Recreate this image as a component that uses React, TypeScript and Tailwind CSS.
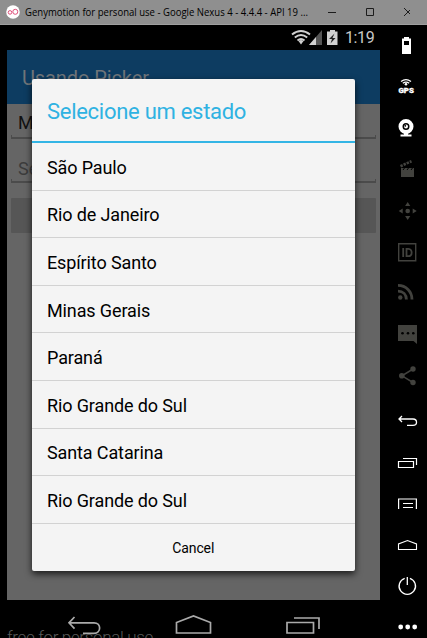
import type { ReactNode } from "react";

const states = [
  "São Paulo",
  "Rio de Janeiro",
  "Espírito Santo",
  "Minas Gerais",
  "Paraná",
  "Rio Grande do Sul",
  "Santa Catarina",
  "Rio Grande do Sul",
];

function Tool({ children, off }: { children: ReactNode; off?: boolean }) {
  return (
    <div className="flex h-[41.5px] shrink-0 items-center pl-4">
      <svg
        width="24"
        height="24"
        viewBox="0 0 24 24"
        fill="none"
        stroke="currentColor"
        className={off ? "text-[#42423e]" : "text-white"}
      >
        {children}
      </svg>
    </div>
  );
}

function Sidebar() {
  return (
    <aside className="flex w-[47px] shrink-0 flex-col overflow-hidden bg-black">
      {/* battery */}
      <Tool>
        <path d="M8 3h5v1.500h2V20H6V4.500h2zM8 7v4h5V7z" fill="currentColor" fillRule="evenodd" stroke="none" />
      </Tool>
      {/* gps */}
      <Tool>
        <path d="M5 6.500q5-3.800 10 0M6.800 8.200q3.200-2.200 6.400 0" strokeWidth="1.300" />
        <circle cx="10" cy="9.300" r="1.300" fill="currentColor" stroke="none" />
        <text x="2.500" y="17.800" fontSize="7" fontWeight="900" textLength="15.400" lengthAdjust="spacingAndGlyphs" fill="currentColor" stroke="currentColor" strokeWidth=".3" className="font-['Roboto',sans-serif]">
          GPS
        </text>
      </Tool>
      {/* webcam */}
      <Tool>
        <circle cx="10" cy="9.500" r="5.500" strokeWidth="4" />
        <circle cx="10" cy="9.500" r="2" fill="currentColor" stroke="none" />
        <circle cx="9.300" cy="8.800" r=".9" fill="black" stroke="none" />
        <path d="M8 16h4v1.500h3.500v2h-11v-2H8z" fill="currentColor" stroke="none" />
      </Tool>
      {/* clapperboard */}
      <Tool off>
        <path d="M5 10h13v9H5z" fill="currentColor" stroke="none" />
        <path d="M4.500 8.200 15.500 3.200" strokeWidth="2.600" strokeDasharray="2.400 1" />
        <path d="m7 12 1.500-2M11 12l1.500-2M15 12l1.500-2" stroke="black" />
      </Tool>
      {/* move */}
      <Tool off>
        <g fill="currentColor" stroke="none">
          <circle cx="11.700" cy="11" r="2.300" />
          <path d="m11.700 2 2.600 4H9.100zM11.700 20l2.600-4H9.100zM2.700 11l4-2.600v5.200zM20.700 11l-4-2.600v5.200z" />
        </g>
      </Tool>
      {/* id */}
      <Tool off>
        <path d="M2.700 2.700h17v17h-17z" strokeWidth="1.400" />
        <path d="M7.200 7v9M10.500 7.800v7.400h2c4.200 0 4.200-7.400 0-7.400z" strokeWidth="1.800" />
      </Tool>
      {/* rss */}
      <Tool off>
        <path d="M2 2.400c8 0 14 6 14 14M2 8.100c5 0 8.400 3.400 8.400 8.400" strokeWidth="2.800" />
        <circle cx="4.300" cy="14.500" r="2.200" fill="currentColor" stroke="none" />
      </Tool>
      {/* message */}
      <Tool off>
        <path d="M2 1h19v19l-3.500-3H2z" fill="currentColor" stroke="none" />
        <g fill="black" stroke="none">
          <circle cx="6.500" cy="9.300" r="1.300" />
          <circle cx="12" cy="9.300" r="1.300" />
          <circle cx="17.300" cy="9.300" r="1.300" />
        </g>
      </Tool>
      {/* share */}
      <Tool off>
        <path d="M17 3 6 9.800l11 6.700" strokeWidth="1.500" />
        <g fill="currentColor" stroke="none">
          <circle cx="17" cy="3" r="2.700" />
          <circle cx="5.800" cy="9.800" r="2.800" />
          <circle cx="17" cy="16.500" r="2.700" />
        </g>
      </Tool>
      {/* back */}
      <Tool>
        <path d="m6 9-3 3 3 3M3 12h14c4.700 0 4.700 6.300 0 6.300h-6" strokeWidth="1.300" />
      </Tool>
      {/* recents */}
      <Tool>
        <path d="M2.500 12.500h15v6h-15zM7 9.500h13.500V16" strokeWidth="1.200" />
      </Tool>
      {/* menu */}
      <Tool>
        <path d="M2.600 19V9h17.800v10" strokeWidth="1.200" />
        <path d="M7 13.500h10M7 17.500h10" strokeWidth="1.200" />
      </Tool>
      {/* home */}
      <Tool>
        <path d="M2.500 17.500V12l9-3.500 9 3.500v5.500z" strokeWidth="1.100" />
      </Tool>
      {/* power */}
      <Tool>
        <path d="M8.700 5.300a8.200 8.200 0 1 0 5.200 0M11.300 4v8" strokeWidth="1.300" />
      </Tool>
      {/* more */}
      <Tool>
        <g fill="currentColor" stroke="none">
          <circle cx="4.700" cy="12" r="2.400" />
          <circle cx="11.700" cy="12" r="2.400" />
          <circle cx="18.700" cy="12" r="2.400" />
        </g>
      </Tool>
    </aside>
  );
}

function TitleBar() {
  return (
    <header className="flex h-[25px] shrink-0 items-center border-b border-[#a0a0a0] bg-[#8f8f8f] font-['Open_Sans',sans-serif] text-black">
      <svg width="14" height="14" viewBox="0 0 14 14" className="ml-1.5 shrink-0">
        <circle cx="7" cy="7" r="6.800" fill="white" />
        <g fill="none" stroke="#e0507c">
          <circle cx="4" cy="7.400" r="1.800" />
          <circle cx="9.300" cy="6.800" r="2.500" />
        </g>
      </svg>
      <svg width="286" height="20" className="ml-[4px] shrink-0">
        <text x="1" y="14" fontSize="10.500" textLength="283" lengthAdjust="spacingAndGlyphs">
          Genymotion for personal use - Google Nexus 4 - 4.4.4 - API 19 ...
        </text>
      </svg>
      <svg width="100" height="24" viewBox="0 0 100 24" fill="none" stroke="#1c1c1c" className="shrink-0">
        <path d="M18 12.500h8M56.500 8.500h7v7h-7z" />
        <path d="m94.500 8 8 8m0-8-8 8" transform="translate(-.5 0)" />
      </svg>
    </header>
  );
}

function StatusBar() {
  return (
    <div className="flex h-[25px] shrink-0 items-center justify-end bg-black">
      <svg width="50" height="20" viewBox="0 0 50 20" className="shrink-0">
        <g fill="none" stroke="#d0d0d0" strokeWidth="2">
          <path d="M1 6.500q9-7 18 0M3.800 9.500q6.200-5 12.400 0M6.500 12.500q3.500-3 7 0" />
        </g>
        <path d="m7.500 13 2.500 3.500 2.500-3.500q-2.500-2-5 0" fill="#d0d0d0" />
        <path d="M31 2v15H18z" fill="#555" />
        <path d="M25 9v8h-7z" fill="#d0d0d0" />
        <path d="M39 2h5v1.500h2.500V17H36V3.500h3z" fill="#d0d0d0" />
        <path d="m43.500 5.500-5.500 5.500h3l-1.500 4.500 5-5.500h-3z" fill="#222" />
      </svg>
      <span className="w-[39px] pl-1 pt-px text-base leading-none tracking-[-0.4px] text-[#c8c8c8]">1:19</span>
    </div>
  );
}

function Field({ children, muted }: { children: ReactNode; muted?: boolean }) {
  return (
    <div className="mx-1 h-11 pt-[7px]">
      <div className={muted ? "h-7 pl-[7px] text-lg leading-7 text-[#3c3c3c]" : "h-7 pl-[7px] text-lg leading-6 text-[#111]"}>
        {children}
      </div>
      <div className="-mt-1 h-1 border-x border-b-2 border-[#4b4b4b]" />
    </div>
  );
}

function NavBar() {
  return (
    <div className="relative h-[38px] shrink-0 bg-black">
      <svg width="380" height="38" viewBox="0 0 380 38" fill="none" stroke="#aaa" strokeWidth="1.700">
        <path d="m74.500 17-5.500 5.800 5.500 5.800M69 22.800h25c7.500 0 7.500 10.500 0 10.500H83" />
        <path d="M176.500 33V22.500L193.500 16l17 6.500V33z" />
        <path d="M287 22.500h26.500V33H287zM294 18h25v11" />
      </svg>
      <p className="absolute left-[7px] top-[27px] whitespace-nowrap text-[17px] font-light leading-5 tracking-[-0.35px] text-[#585858]">
        free for personal use
      </p>
    </div>
  );
}

function PickerDialog() {
  return (
    <section className="absolute left-[31.5px] top-[54px] flex h-[492px] w-[323.5px] flex-col rounded-[2px] bg-[#f4f4f4] shadow-[0_3px_7px_rgba(0,0,0,0.75)]">
      <h2 className="flex h-[64px] shrink-0 items-center border-b-2 border-[#33b5e5] pl-[15.5px] pt-0.5 text-[22px] tracking-[-0.28px] text-[#2fb2e2]">
        Selecione um estado
      </h2>
      <ul>
        {states.map((name, i) => (
          <li key={i} className="flex h-[47.6px] items-center border-b border-[#d2d2d2] pl-[15.5px] pt-[3px] text-lg tracking-[-0.12px] text-black">
            {name}
          </li>
        ))}
      </ul>
      <button className="grow pt-0.5 text-sm tracking-[-0.1px] text-black">Cancel</button>
    </section>
  );
}

export default function App() {
  return (
    <div className="flex h-[638px] w-[427px] flex-col overflow-hidden bg-black font-['Roboto',sans-serif]">
      <TitleBar />
      <div className="flex min-h-0 flex-1">
        <main className="relative flex w-[380px] shrink-0 flex-col overflow-hidden">
          <StatusBar />
          <div className="ml-[7px] flex min-h-0 flex-1 flex-col bg-[#656565]">
            <div className="flex h-[54px] shrink-0 items-center bg-[#0d3c61] pl-[15px] pt-px text-xl tracking-[-0.1px] text-[#707579]">Usando Picker</div>
            <Field>Minas Gerais</Field>
            <Field muted>Selecione</Field>
            <div className="mx-1 mt-1.5 h-[35px] rounded-[1px] bg-[#565656]" />
          </div>
          <NavBar />
          <PickerDialog />
        </main>
        <Sidebar />
      </div>
    </div>
  );
}
